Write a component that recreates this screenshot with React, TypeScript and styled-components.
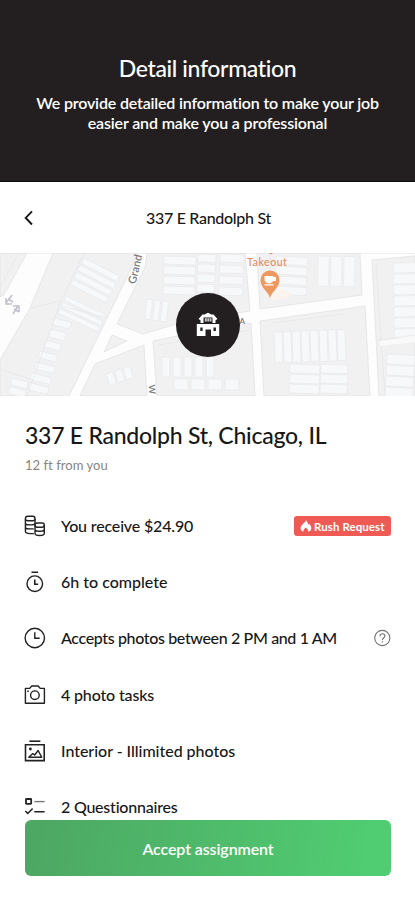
import React from 'react';
import styled, { createGlobalStyle } from 'styled-components';

const GlobalStyle = createGlobalStyle`
  * { box-sizing: border-box; }
  body { margin: 0; background: #fff; }
  button { font: inherit; border: 0; padding: 0; background: none; }
`;

const Screen = styled.main`
  display: flex;
  flex-direction: column;
  width: 415px;
  height: 900px;
  overflow: hidden;
  background: #fff;
  color: #171717;
  font-family: Lato, sans-serif;
  font-weight: 500;
`;

const Hero = styled.header`
  flex: none;
  height: 182px;
  padding-top: 53px;
  border-bottom: 1px solid #0c0a0b;
  background: #231f20;
  color: #fff;
  text-align: center;
`;

const HeroTitle = styled.h1`
  margin: 0 0 10px;
  font-size: 23px;
  line-height: 30px;
  font-weight: 500;
  letter-spacing: -0.35px;
`;

const HeroLine = styled.div<{ $track: number }>`
  font-size: 16px;
  line-height: 20px;
  font-weight: 600;
  letter-spacing: ${(p) => p.$track}px;
`;

const NavBar = styled.nav`
  flex: none;
  display: grid;
  grid-template-columns: 60px 1fr 60px;
  align-items: center;
  height: 71px;
  padding-top: 1px;
`;

const BackButton = styled.button`
  display: flex;
  padding-left: 22px;
`;

const NavTitle = styled.div`
  padding-left: 2px;
  text-align: center;
  font-size: 16px;
  line-height: 20px;
  letter-spacing: -0.3px;
`;

const MapArea = styled.section`
  flex: none;
  position: relative;
  height: 143px;
  overflow: hidden;
`;

const MapMarker = styled.div`
  position: absolute;
  left: 176px;
  top: 40px;
  display: flex;
  align-items: center;
  justify-content: center;
  width: 64px;
  height: 64px;
  border-radius: 50%;
  background: #231f20;
`;

const Summary = styled.section`
  flex: none;
  height: 102px;
  padding: 24px 25px 0;
`;

const Address = styled.h2`
  margin: 0 0 6px;
  font-size: 23px;
  line-height: 30px;
  font-weight: 500;
  letter-spacing: -0.25px;
  white-space: nowrap;
`;

const Distance = styled.div`
  font-size: 13px;
  line-height: 18px;
  font-weight: 400;
  letter-spacing: 0.04px;
  color: #858585;
`;

const FactList = styled.ul`
  flex: none;
  height: 322px;
  margin: 0;
  padding: 0 24px;
  overflow: hidden;
  list-style: none;
`;

const FactRow = styled.li`
  display: flex;
  align-items: center;
  height: 56.2px;
`;

const FactIcon = styled.span`
  flex: none;
  display: flex;
  width: 37px;
`;

const FactText = styled.span<{ $track: number }>`
  flex: 1;
  font-size: 16px;
  line-height: 20px;
  letter-spacing: ${(p) => p.$track}px;
  white-space: nowrap;
`;

const RushBadge = styled.span`
  display: flex;
  align-items: center;
  gap: 2px;
  width: 97px;
  height: 20px;
  padding-left: 6px;
  border-radius: 3px;
  background: #ef5a55;
  color: #fff;
  font-size: 11.5px;
  font-weight: 700;
  letter-spacing: 0.08px;
  white-space: nowrap;
`;

const Footer = styled.footer`
  flex: none;
  display: flex;
  padding: 0 24px 0 25px;
`;

const AcceptButton = styled.button`
  flex: 1;
  height: 56px;
  border-radius: 6px;
  background: linear-gradient(100deg, #4da863 5%, #50cd72 95%);
  color: #fff;
  font-size: 16px;
  font-weight: 600;
  letter-spacing: -0.1px;
`;

const line = { fill: 'none', stroke: '#222', strokeWidth: 1.4 } as const;

const CoinsIcon = () => (
  <svg width="22" height="22" viewBox="0 0 22 22" {...line}>
    <rect x="1.400" y="1.200" width="9.600" height="4.500" rx="2.200" />
    <path d="M1.400 4v12.300c0 1.400 2.100 2.300 4.800 2.300h3.600M11 4v4M1.400 8c0 1.200 2.100 1.900 4.800 1.900S11 9.200 11 8M1.400 12c0 1.200 2.100 1.900 4.800 1.900h3.600" />
    <rect x="11" y="8" width="9.300" height="4.200" rx="2.100" />
    <path d="M11 10v8.300c0 1.300 2.100 2.200 4.700 2.200s4.600-.9 4.600-2.200V10M11 14.300c0 1.200 2.100 1.900 4.700 1.900s4.600-.7 4.600-1.900" />
  </svg>
);

const StopwatchIcon = () => (
  <svg width="22" height="22" viewBox="0 0 22 22" {...line}>
    <circle cx="10.8" cy="12.7" r="7.8" />
    <path d="M7.5 1.3h6.600M10.8 8.5v4.7h3.4" strokeWidth="1.6" />
  </svg>
);

const ClockIcon = () => (
  <svg width="22" height="22" viewBox="0 0 22 22" {...line}>
    <circle cx="10.8" cy="11" r="9.7" />
    <path d="M10.8 5.2v6h4.9" />
  </svg>
);

const CameraIcon = () => (
  <svg width="22" height="22" viewBox="0 0 22 22" {...line}>
    <path d="M1.4 4.400h4.300l2-2.400h6.500l2 2.400h4.200v14.900h-19z" strokeLinejoin="round" />
    <circle cx="10.9" cy="11.2" r="4.3" />
    <path d="M3.3 7.3h1.5" />
  </svg>
);

const GalleryIcon = () => (
  <svg width="22" height="22" viewBox="0 0 22 22" {...line}>
    <path d="M5.4 1.200h11" strokeWidth="1.600" />
    <path d="M1.500 4.700h18.700v15.900H1.500z" strokeWidth="1.600" />
    <path d="M4.8 17.200l4-3.600 1.900 1.400 3.400-4.500 3.600 6.700z" strokeLinejoin="round" />
    <circle cx="6.4" cy="9" r=".7" fill="#222" />
  </svg>
);

const ChecklistIcon = () => (
  <svg width="22" height="22" viewBox="0 0 22 22" {...line}>
    <rect x="2" y="3" width="5.200" height="4.800" rx=".5" strokeWidth="1.8" />
    <path d="M10.300 5.600h10.300" stroke="#777" />
    <path d="M10.300 15.800h10.300M1.300 15l2.500 2.400 4.800-5" strokeWidth="1.500" />
  </svg>
);

const HelpIcon = () => (
  <svg width="17" height="18" viewBox="0 0 17 18" fill="none" stroke="#747474" strokeWidth="1.1">
    <circle cx="8.3" cy="9" r="7.6" />
    <path d="M5.9 7.2c0-1.4 1-2.4 2.5-2.4s2.5.9 2.5 2.1c0 1.8-2.5 1.9-2.5 4M8.4 12.2v1.3" />
  </svg>
);

const FlameIcon = () => (
  <svg width="12" height="12" viewBox="0 0 12 12">
    <path d="M6 .3C5.700 2.400.6 4.800.6 8.200c0 1.800 1.100 3 2.900 3.400-.3-1.800.9-2.900 2.300-4.100 1.500 1.200 2.600 2.300 2.200 4.100 2.100-.4 3.300-1.800 3.300-3.400 0-2-1.100-3.600-2.400-4.400l-.6 1.100C8.100 3 7.100 1.500 6 .3z" fill="#fff" />
  </svg>
);

const HouseIcon = () => (
  <svg width="24" height="26" viewBox="0 0 24 26" fill="#fff">
    <path d="M6.500 2.500h2L12 .8l3.500 1.700h2L21.500 7l-2 1.300V11h-15V8.300L2.500 7z" />
    <path d="M7.500 5.500h9V11h-9z" fill="#231f20" />
    <path d="M8.800 6.300h2v3.200h-2zM11.300 6.300h1.700v3.200h-1.700zM13.500 6.300h2v3.200h-2z" fill="#c9c7c8" />
    <path d="M.8 12h22.400v12H15v-6.500H9.500V24H.8zM4.300 15.500v3.600h2.300v-3.600zM17.500 15.500v3.600h2.400v-3.600z" fillRule="evenodd" />
  </svg>
);

type Lot = { x: number; y: number; w: number; h: number; rot: number; n: number; step: number; dir?: 'x' | 'y' };

const lots: Lot[] = [
  { x: 84, y: 5, w: 40, h: 6, rot: 27, n: 4, step: 8 },
  { x: 66, y: 43, w: 44, h: 5, rot: 25, n: 3, step: 7 },
  { x: 54, y: 65, w: 18, h: 7, rot: 14, n: 1, step: 8 },
  { x: 50, y: 76, w: 17, h: 8, rot: 14, n: 1, step: 8 },
  { x: 45, y: 87, w: 17, h: 7, rot: 14, n: 1, step: 8 },
  { x: 40, y: 98, w: 18, h: 7, rot: 14, n: 1, step: 8 },
  { x: 36, y: 109, w: 20, h: 7, rot: 14, n: 1, step: 8 },
  { x: 32, y: 120, w: 20, h: 7, rot: 14, n: 2, step: 10 },
  { x: 12, y: 125, w: 17, h: 7, rot: 14, n: 2, step: 9 },
  { x: 164, y: 3, w: 32, h: 8, rot: 2, n: 4, step: 10 },
  { x: 198, y: 1, w: 18, h: 8, rot: 2, n: 4, step: 10 },
  { x: 220, y: 1, w: 24, h: 8, rot: 2, n: 4, step: 11 },
  { x: 147, y: 46, w: 6, h: 20, rot: 8, n: 3, step: 8, dir: 'x' },
  { x: 162, y: 104, w: 8, h: 20, rot: 0, n: 5, step: 11, dir: 'x' },
  { x: 174, y: 126, w: 14, h: 11, rot: 0, n: 4, step: 17, dir: 'x' },
  { x: 106, y: 121, w: 7, h: 12, rot: -18, n: 3, step: 9, dir: 'x' },
  { x: 276, y: 3, w: 32, h: 8, rot: 3, n: 4, step: 10 },
  { x: 318, y: 3, w: 11, h: 30, rot: 1, n: 3, step: 13, dir: 'x' },
  { x: 274, y: 79, w: 8, h: 31, rot: -2, n: 8, step: 9, dir: 'x' },
  { x: 290, y: 111, w: 30, h: 9, rot: 2, n: 3, step: 10 },
  { x: 321, y: 111, w: 27, h: 9, rot: 2, n: 3, step: 10 },
  { x: 393, y: 10, w: 26, h: 10, rot: -1, n: 7, step: 11 },
  { x: 387, y: 101, w: 28, h: 10, rot: 3, n: 4, step: 11 },
];

const blocks = [
  'M0 0H27L4 42 0 44z',
  'M53 0H138L133 12 69 143H0V107L30 55z',
  'M147 0H245L250 58 177 71 143 81 117 71 145 14z',
  'M112 82L127 88 104 99z',
  'M95 111L144 92 147 143H80z',
  'M153 88L177 83 251 70 255 143H157z',
  'M257 0H360L362 42 260 56z',
  'M260 68L365 53 370 143H264z',
  'M372 7L415 3V143H379z',
];

const CityMap = () => (
  <svg width="415" height="143" viewBox="0 0 415 143">
    <rect width="415" height="143" fill="#fdfdfd" />
    <g fill="#f1f1f2" stroke="#dfe0e2" strokeWidth=".7">
      {blocks.map((d) => <path key={d} d={d} />)}
    </g>
    <g fill="#f7f8f9" stroke="#e8e9eb" strokeWidth=".7">
      {lots.map((l, i) => (
        <g key={i} transform={`translate(${l.x} ${l.y}) rotate(${l.rot})`}>
          {Array.from({ length: l.n }, (_, k) => (
            <rect
              key={k}
              x={l.dir === 'x' ? k * l.step : 0}
              y={l.dir === 'x' ? 0 : k * l.step}
              width={l.w}
              height={l.h}
            />
          ))}
        </g>
      ))}
    </g>
    <path d="M0 0H415" stroke="#e6e6e7" />
    <g fill="none" stroke="#e4e5e7" strokeWidth=".7">
      <path d="M84 0L61 48 27 143M19 0L0 34M62 53L106 65M0 116L30 126M61 48L30 55M158 92L250 77M270 0V48M272 70L345 61M378 87L415 82M376 12L385 143" />
    </g>
    <path d="M380 88L415 84V89L380 93z" fill="#fafafa" />
    <g fill="none" stroke="#bfc0cb" strokeWidth="1.5">
      <path d="M12 42L6 50M6 45v6h6M8 46l5 3" />
      <path d="M13 61l5-8M13 53h6v6M14 56l5 3" />
    </g>
    <g fontFamily="Lato, sans-serif" fill="#77787b">
      <text fontSize="11" fontWeight="600" transform="translate(135.500 31.500) rotate(-77)">Grand</text>
      <text fontSize="9" fontWeight="600" transform="translate(148.500 132) rotate(85)">W</text>
      <text fontSize="8" fontWeight="600" x="239.500" y="71">A</text>
    </g>
    <text x="247" y="12.500" fontFamily="Lato, sans-serif" fontSize="10.500" letterSpacing=".55" fill="#e58a5e">Takeout</text>
    <path d="M269 0h4l-2 1.500z" fill="#e58a5e" />
    <path d="M274 37c8-2 13 1 17 3l-5 6-16 2z" fill="#fbf3ee" />
    <path d="M270 45c-1.200-6-9.500-10-9.500-18a9.500 9.500 0 0 1 19 0c0 8-8.300 12-9.500 18z" fill="#ee975f" />
    <path d="M264.500 23h8.800v1h2.700v4h-3c-.6 1.600-2 2.400-3.800 2.400-3 0-4.700-1.800-4.700-4.400zM264.500 31.300h9v1.200h-9z" fill="#fff" />
  </svg>
);

const facts = [
  { icon: <CoinsIcon />, text: 'You receive $24.90', track: -0.16, extra: <RushBadge><FlameIcon />Rush Request</RushBadge> },
  { icon: <StopwatchIcon />, text: '6h to complete', track: 0 },
  { icon: <ClockIcon />, text: 'Accepts photos between 2 PM and 1 AM', track: -0.36, extra: <HelpIcon /> },
  { icon: <CameraIcon />, text: '4 photo tasks', track: -0.15 },
  { icon: <GalleryIcon />, text: 'Interior - Illimited photos', track: -0.03 },
  { icon: <ChecklistIcon />, text: '2 Questionnaires', track: -0.22 },
];

export default function App() {
  return (
    <Screen>
      <GlobalStyle />
      <Hero>
        <HeroTitle>Detail information</HeroTitle>
        <HeroLine $track={-0.17}>We provide detailed information to make your job</HeroLine>
        <HeroLine $track={-0.15}>easier and make you a professional</HeroLine>
      </Hero>
      <NavBar>
        <BackButton aria-label="Back">
          <svg width="14" height="18" viewBox="0 0 14 18" fill="none" stroke="#171717" strokeWidth="1.9">
            <path d="M10 2.300L3.700 8.900 10 15.500" />
          </svg>
        </BackButton>
        <NavTitle>337 E Randolph St</NavTitle>
      </NavBar>
      <MapArea>
        <CityMap />
        <MapMarker><HouseIcon /></MapMarker>
      </MapArea>
      <Summary>
        <Address>337 E Randolph St, Chicago, IL</Address>
        <Distance>12 ft from you</Distance>
      </Summary>
      <FactList>
        {facts.map((f) => (
          <FactRow key={f.text}>
            <FactIcon>{f.icon}</FactIcon>
            <FactText $track={f.track}>{f.text}</FactText>
            {f.extra}
          </FactRow>
        ))}
      </FactList>
      <Footer>
        <AcceptButton>Accept assignment</AcceptButton>
      </Footer>
    </Screen>
  );
}
